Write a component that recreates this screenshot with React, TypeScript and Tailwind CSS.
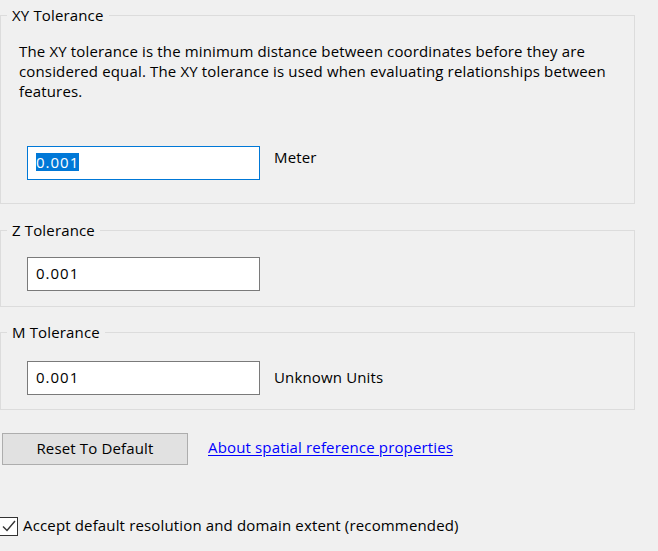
import * as React from "react"

// Spatial reference tolerance page (XY / Z / M tolerances), drawn like the
// classic Windows property sheet.

function FakeInput({
  value,
  selected = false,
  focused = false,
}: {
  value: string
  selected?: boolean
  focused?: boolean
}) {
  return (
    <div
      className={
        focused
          ? "flex h-[34px] w-[233px] items-center border border-[#0078d7] bg-white pl-[8px] pb-[3px] tracking-[1px]"
          : "flex h-[34px] w-[233px] items-center border border-[#7a7a7a] bg-white pl-[8px] pb-[3px] tracking-[1px]"
      }
    >
      {selected ? (
        <span className="bg-[#0078d7] leading-[18px] text-white">{value}</span>
      ) : (
        <span className="leading-[18px]">{value}</span>
      )}
    </div>
  )
}

function GroupBox({
  title,
  className,
  children,
}: {
  title: string
  className: string
  children: React.ReactNode
}) {
  return (
    <fieldset className={`w-[635px] border border-[#dcdcdc] ${className}`}>
      <legend className="ml-[6px] px-[5px] leading-[20px]">{title}</legend>
      {children}
    </fieldset>
  )
}

export default function App() {
  return (
    <div className="h-[551px] w-[658px] overflow-hidden bg-[#f0f0f0] font-['Open_Sans',sans-serif] text-[15px] tracking-[0.15px] text-black">
      <GroupBox title="XY Tolerance" className="mt-[5px] pb-[23px]">
        <p className="ml-[18px] pt-[16px] leading-[20px]">
          The XY tolerance is the minimum distance between coordinates before they are
          <br />
          considered equal. The XY tolerance is used when evaluating relationships between
          <br />
          features.
        </p>
        <div className="ml-[26px] mt-[45px] flex items-start gap-[14px]">
          <FakeInput value="0.001" selected focused />
          <span className="pt-[1px] leading-[20px]">Meter</span>
        </div>
      </GroupBox>

      <GroupBox title="Z Tolerance" className="mt-[16px] pb-[15px]">
        <div className="ml-[26px] mt-[17px] flex items-center gap-[14px]">
          <FakeInput value="0.001" />
        </div>
      </GroupBox>

      <GroupBox title="M Tolerance" className="mt-[15px] pb-[14px]">
        <div className="ml-[26px] mt-[19px] flex items-center gap-[14px]">
          <FakeInput value="0.001" />
          <span className="pb-[2px] leading-[20px]">Unknown Units</span>
        </div>
      </GroupBox>

      <div className="ml-[2px] mt-[23px] flex items-center gap-[20px]">
        <button
          type="button"
          className="h-[32px] w-[186px] border border-[#adadad] bg-[#e1e1e1] pb-[2px] leading-[20px]"
        >
          Reset To Default
        </button>
        <a href="#" className="pb-[3px] text-[#0000ff] underline underline-offset-2">
          About spatial reference properties
        </a>
      </div>

      <label className="mt-[50px] flex items-center gap-[5px]">
        <span className="-ml-[1px] flex h-[19px] w-[19px] items-center justify-center border border-[#333333] bg-white">
          <svg viewBox="0 0 16 16" className="h-[16px] w-[16px]" aria-hidden>
            <path d="M2 8.5 L6 12.5 L14 3" fill="none" stroke="#333333" strokeWidth="1.4" />
          </svg>
        </span>
        <span className="pb-[2px] leading-[20px]">Accept default resolution and domain extent (recommended)</span>
      </label>
    </div>
  )
}
